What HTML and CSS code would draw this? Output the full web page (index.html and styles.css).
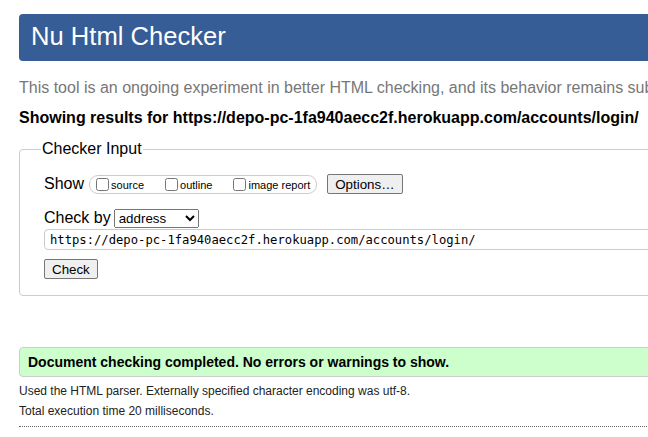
FILE: index.html
```html
<!DOCTYPE html>
<html lang="en">
<head>
<meta charset="utf-8">
<title>Nu Html Checker</title>
<link rel="stylesheet" href="styles.css">
</head>
<body>
<div class="page">
  <h1 class="title">Nu Html Checker</h1>
  <p class="about">This tool is an ongoing experiment in better HTML checking, and its behavior remains subject to change</p>
  <p class="results-for">Showing results for https://depo-pc-1fa940aecc2f.herokuapp.com/accounts/login/</p>
  <form class="form">
    <fieldset class="checker">
      <legend class="checker-legend">Checker Input</legend>
      <div class="row row-show">
        <span class="field-label">Show</span>
        <span class="opts">
          <label class="opt"><input type="checkbox" class="cb"><span>source</span></label>
          <label class="opt"><input type="checkbox" class="cb"><span>outline</span></label>
          <label class="opt opt-last"><input type="checkbox" class="cb"><span>image report</span></label>
        </span>
        <button type="button" class="btn btn-options">Options…</button>
      </div>
      <div class="row row-checkby">
        <label class="field-label" for="docselect">Check by</label>
        <select id="docselect" class="select">
          <option>address</option>
          <option>file upload</option>
          <option>text input</option>
        </select>
      </div>
      <div class="row row-url">
        <input type="url" class="url" value="https://depo-pc-1fa940aecc2f.herokuapp.com/accounts/login/">
      </div>
      <div class="row row-submit">
        <button type="button" class="btn btn-check">Check</button>
      </div>
    </fieldset>
  </form>
  <div class="success">Document checking completed. No errors or warnings to show.</div>
  <p class="details">Used the HTML parser. Externally specified character encoding was utf-8.</p>
  <p class="details">Total execution time 20 milliseconds.</p>
  <hr class="dotted">
</div>
</body>
</html>
```
FILE: styles.css
```css
html, body {
  margin: 0;
  padding: 0;
  overflow: hidden;
  background: #fff;
}
body {
  font-family: "Liberation Sans", Arial, sans-serif;
  color: #000;
}
.page {
  width: 1000px;
  padding: 14px 0 0 19px;
}
.title {
  margin: 0;
  height: 47px;
  line-height: 45px;
  padding-left: 12px;
  font-size: 25.6px;
  font-weight: normal;
  color: #fff;
  background: #365d95;
  border-radius: 4px;
}
.about {
  margin: 18px 0 0;
  font-size: 16px;
  line-height: 18px;
  color: #777;
  white-space: nowrap;
}
.results-for {
  margin: 12px 0 0;
  font-size: 16px;
  line-height: 18px;
  font-weight: bold;
  white-space: nowrap;
}
.form {
  margin: 0;
}
.checker {
  margin: 13px 0 0;
  padding: 0 0 16px 24px;
  border: 1px solid #ccc;
  border-radius: 4px;
  min-width: 0;
}
.checker-legend {
  margin-left: -3px;
  padding: 0 1px;
  font-size: 16px;
  line-height: 18px;
}
.row {
  display: flex;
  align-items: center;
  height: 20px;
}
.row-show { margin-top: 16px; }
.row-checkby { margin-top: 14px; }
.row-url { margin-top: 1px; height: 21px; }
.row-submit { margin-top: 9px; }
.field-label {
  font-size: 16px;
  line-height: 18px;
}
.opts {
  display: flex;
  align-items: center;
  height: 17px;
  margin-left: 5px;
  padding: 0 6px 0 6px;
  border: 1px solid #ccc;
  border-radius: 9px;
}
.opt {
  display: flex;
  align-items: flex-end;
  font-size: 11px;
  line-height: 12px;
  margin-right: 21px;
}
.opt-last { margin-right: 0; }
.cb {
  width: 13px;
  height: 13px;
  margin: 0 2px 0 0;
}
.btn {
  height: 20px;
  padding: 0 7px;
  font-family: "Liberation Sans", Arial, sans-serif;
  font-size: 13.33px;
  color: #000;
  background: #efefef;
  border: 1px solid #767676;
  border-radius: 2px;
}
.btn-options { margin-left: 10px; }
.select {
  margin-left: 3px;
  width: 85px;
  height: 19px;
  font-family: "Liberation Sans", Arial, sans-serif;
  font-size: 13.33px;
  color: #000;
}
.url {
  box-sizing: border-box;
  width: 940px;
  height: 21px;
  margin: 0;
  padding: 0 5px;
  font-family: "DejaVu Sans Mono", "Liberation Mono", monospace;
  font-size: 12.2px;
  color: #000;
  border: 1px solid #ccc;
  border-radius: 4px;
  outline: none;
}
.success {
  margin-top: 51px;
  height: 28px;
  line-height: 28px;
  padding-left: 8px;
  font-size: 14px;
  font-weight: bold;
  color: #000;
  background: #ccffcc;
  border: 1px solid #ccc;
  border-radius: 4px;
  white-space: nowrap;
}
.details {
  margin: 0;
  font-size: 12px;
  line-height: 20px;
  color: #222;
}
.success + .details { margin-top: 4px; }
.dotted {
  margin: 5px 0 0;
  height: 0;
  border: 0;
  border-top: 1px dotted #666;
}
```
